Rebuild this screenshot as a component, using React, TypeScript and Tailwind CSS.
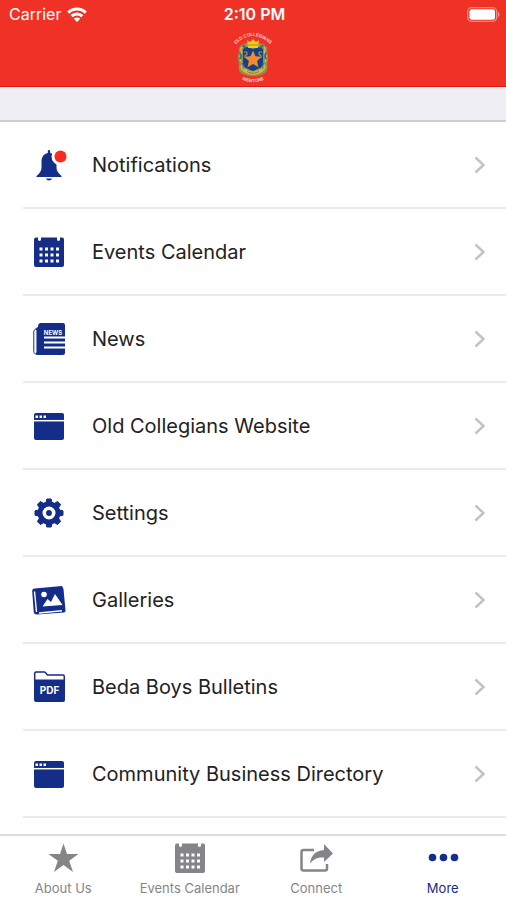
import React, { useState } from 'react';

type IconProps = { className?: string };

interface MenuItem {
    id: string;
    label: string;
    icon: React.FC<IconProps>;
};

const WifiIcon: React.FC<IconProps> = ({ className }) => (
    <svg viewBox="0 0 20 15" className={className} fill="none" stroke="currentColor" strokeWidth="3" aria-hidden="true">
        <path d="M1.2 5.6C6.2.7 13.8.7 18.8 5.6" />
        <path d="M4.6 9.2c3.1-3 7.7-3 10.8 0" />
        <path d="M10 15l-3.2-3.3c1.8-1.6 4.6-1.6 6.4 0z" fill="currentColor" stroke="none" />
    </svg>
);

const BatteryIcon: React.FC<IconProps> = ({ className }) => (
    <svg viewBox="0 0 33 15" className={className} aria-hidden="true">
        <rect x="0.7" y="0.7" width="29" height="13.6" rx="4" fill="none" stroke="#fff" strokeOpacity="0.45" strokeWidth="1.3" />
        <rect x="2.5" y="2.3" width="25.5" height="10.4" rx="2.5" fill="#fff" />
        <path d="M31 5c2 .8 2 4.2 0 5z" fill="#fff" fillOpacity="0.5" />
    </svg>
);

const Crest: React.FC<IconProps> = ({ className }) => (
    <svg viewBox="0 0 40 52" className={className} role="img" aria-label="Old Collegians">
        <defs>
            <path id="crest-top" d="M2 13Q20-5 38 13" />
            <path id="crest-bottom" d="M5 45.500Q20 55 35 45.500" />
        </defs>
        <g fill="#ffdcd8" fontSize="4.500" fontWeight="600" textAnchor="middle" fontFamily="Inter, sans-serif">
            <text><textPath href="#crest-top" startOffset="50%">OLD COLLEGIANS</textPath></text>
            <text><textPath href="#crest-bottom" startOffset="50%">MENTONE</textPath></text>
        </g>
        {/* mantling */}
        <path d="M13 11C8 12 5 15 6 20c-2 4-1 9 0 12-1 4 0 9 4 10 5 3 15 3 20 0 4-1 5-6 4-10 1-3 2-8 0-12 1-5-2-8-7-9z" fill="#8f8f58" />
        <path d="M9 15c-3 3 1 4-1 7s-1 5 0 8M31 15c3 3-1 4 1 7s1 5 0 8M9 33c-2 3 1 7 5 6M31 33c2 3-1 7-5 6" fill="none" stroke="#d8b545" strokeWidth="1.500" />
        <path d="M6.500 21c2 1 2 4 0 6M33.500 21c-2 1-2 4 0 6M10 13l3 4M30 13l-3 4M10 31c0 3 2 4 4 5M30 31c0 3-2 4-4 5" fill="none" stroke="#2c6b80" strokeWidth="1.500" />
        {/* shield */}
        <path d="M10 17l4-2 6 2 6-2 4 2v13c0 5-5 7-10 9-5-2-10-4-10-9z" fill="#12408a" />
        <path d="M11 20h3v3h-2v3M29 20h-3v3h2v3" fill="none" stroke="#c9a63f" strokeWidth="0.900" />
        <path d="M20 18.500l2.500 5.700 6.300.6-4.700 4.200 1.400 6.200-5.500-3.300-5.500 3.300 1.400-6.200-4.700-4.200 6.300-.6z" fill="#f58a2c" />
        <path d="M14 8l3 2 3-3 3 3 3-2-1 8H15z" fill="#f2cb20" />
        <path d="M15 13h10" stroke="#b98a1c" strokeWidth="1" />
        <path d="M11 36q9 7 18 0v4q-9 6-18 0z" fill="#d9b63c" />
        <path d="M14 39.500q6 3.500 12 0" fill="none" stroke="#8a7a3a" strokeWidth="1" />
    </svg>
);

const BellIcon: React.FC<IconProps> = ({ className }) => (
    <svg viewBox="0 0 32 32" className={className} aria-hidden="true">
        <path d="M16 1c.7 0 1.200.6 1.200 1.400v1.500c4.500 1 6.300 4.500 6.300 9v5.500c0 3 1.500 5.500 5 8.600v1H3.500v-1c3.500-3 5-5.600 5-8.600v-5.500c0-4.500 1.800-8 6.300-9V2.400c0-.8.5-1.400 1.200-1.400z" fill="currentColor" />
        <path d="M13 29.500h6c-.4 1.300-1.500 2-3 2s-2.600-.7-3-2z" fill="currentColor" />
        <circle cx="27.500" cy="7.500" r="9" fill="#fff" />
        <circle cx="27.500" cy="7.500" r="6" fill="#fb2a20" />
    </svg>
);

const CalendarIcon: React.FC<IconProps> = ({ className }) => (
    <svg viewBox="0 0 32 32" className={className} aria-hidden="true">
        <path d="M3 1.500h2v2.300c0 1.500 3 1.500 3 0V1.500h16v2.300c0 1.500 3 1.500 3 0V1.500h2a2 2 0 0 1 2 2v25.500a2 2 0 0 1-2 2H3a2 2 0 0 1-2-2V3.500a2 2 0 0 1 2-2z" fill="currentColor" />
        {[12, 18, 24].map((y) =>
            [7, 12.5, 18, 23.5].map((x) => (
                <rect key={`${x}-${y}`} x={x - 0.5} y={y - 0.5} width="3" height="3" fill="#fff" />
            ))
        )}
    </svg>
);

const NewsIcon: React.FC<IconProps> = ({ className }) => (
    <svg viewBox="0 0 32 32" className={className} aria-hidden="true">
        <path d="M5 5H3.500L.8 8v20.500c0 1.500 1 2.500 2.500 2.500H7" fill="none" stroke="currentColor" strokeWidth="1" />
        <path d="M8 0h22a2 2 0 0 1 2 2v28a2 2 0 0 1-2 2H4.500c-1 0-1.500-.5-1.500-1.500V6l2-2c0-3 1-4 3-4z" fill="currentColor" />
        <path d="M2.700 7v22.500" stroke="#fff" strokeWidth="1.500" />
        <text x="20" y="11.500" fill="#fff" fontSize="6" fontWeight="700" textAnchor="middle" fontFamily="Inter, sans-serif">NEWS</text>
        <path d="M11 14.500h21M11 19.500h21M11 24.500h21" stroke="#fff" strokeWidth="1.800" />
    </svg>
);

const BrowserIcon: React.FC<IconProps> = ({ className }) => (
    <svg viewBox="0 0 32 32" className={className} aria-hidden="true">
        <rect x="1" y="3" width="30" height="27" rx="2" fill="currentColor" />
        <path d="M1 10.700h30" stroke="#fff" strokeWidth="1.500" />
        <path d="M2.500 5.500H5v2.500H2.500zM6.500 5.500H9v2.500H6.500zM10.500 5.500H13v2.500h-2.500z" fill="#fff" />
    </svg>
);

const GearIcon: React.FC<IconProps> = ({ className }) => (
    <svg viewBox="0 0 32 32" className={className} aria-hidden="true">
        <circle cx="16" cy="16" r="11.500" fill="currentColor" />
        {[0, 45, 90, 135, 180, 225, 270, 315].map((angle) => (
            <path key={angle} d="M13 6l.8-4h4.400l.8 4z" fill="currentColor" stroke="currentColor" strokeLinejoin="round" transform={`rotate(${angle} 16 16)`} />
        ))}
        <circle cx="16" cy="16" r="4.700" fill="none" stroke="#fff" strokeWidth="3.600" />
    </svg>
);

const GalleryIcon: React.FC<IconProps> = ({ className }) => (
    <svg viewBox="0 0 34 30" className={className} aria-hidden="true">
        <path d="M2.500 3.500L30 1 31.500 4l2 21.500c0 1.200-.5 1.800-1.500 2L5 29.500c-2 0-3-.8-3.300-2.500L.2 6C.2 4.500 1 3.600 2.500 3.500z" fill="currentColor" />
        <path d="M2.500 6.500l2 20.500M7 28l23-2.300" fill="none" stroke="#fff" strokeWidth="1.400" />
        <circle cx="12" cy="9.500" r="2.800" fill="#fff" />
        <path d="M10.500 21.500l5-7.500 3.500 3 4-8 7.500 11z" fill="#fff" />
    </svg>
);

const PdfIcon: React.FC<IconProps> = ({ className }) => (
    <svg viewBox="0 0 32 32" className={className} aria-hidden="true">
        <path d="M1.700 10V2.500c0-1 .5-1.500 1.500-1.500h8.300c1.500 0 2 3 3.500 3h14.800c1 0 1.500.5 1.500 1.500V10" fill="none" stroke="currentColor" strokeWidth="1.500" />
        <path d="M1 8.500h31V29a2 2 0 0 1-2 2H3a2 2 0 0 1-2-2z" fill="currentColor" />
        <text x="16.500" y="23" fill="#fff" fontSize="10" fontWeight="700" textAnchor="middle" fontFamily="Inter, sans-serif">PDF</text>
    </svg>
);

const StarIcon: React.FC<IconProps> = ({ className }) => (
    <svg viewBox="0 0 32 32" className={className} aria-hidden="true">
        <path d="M16.500 1.500L20 12h11.500l-9.300 6.700 3.800 11.300-9.500-7-9.500 7 3.800-11.300L1.500 12H13z" fill="currentColor" />
    </svg>
);

const ShareIcon: React.FC<IconProps> = ({ className }) => (
    <svg viewBox="0 0 32 32" className={className} aria-hidden="true">
        <path d="M14 8H3.500a2 2 0 0 0-2 2v16.500a2 2 0 0 0 2 2h21.500a2 2 0 0 0 2-2V22" fill="none" stroke="currentColor" strokeWidth="2.500" />
        <path d="M24 2l9 9.500-9 8.500v-4.500c-6-.3-10 1-14 6 1-8.500 6-13 14-13.500z" fill="currentColor" />
    </svg>
);

const DotsIcon: React.FC<IconProps> = ({ className }) => (
    <svg viewBox="0 0 32 32" className={className} aria-hidden="true">
        <circle cx="5.500" cy="15.500" r="3.800" fill="currentColor" />
        <circle cx="16.500" cy="15.500" r="3.800" fill="currentColor" />
        <circle cx="27.500" cy="15.500" r="3.800" fill="currentColor" />
    </svg>
);

const ChevronIcon: React.FC<IconProps> = ({ className }) => (
    <svg viewBox="0 0 12 18" className={className} fill="none" stroke="currentColor" strokeWidth="2.400" aria-hidden="true">
        <path d="M1.500 1.500L9.500 9l-8 7.500" />
    </svg>
);

const menuItems: MenuItem[] = [
    { id: 'notifications', label: 'Notifications', icon: BellIcon },
    { id: 'events', label: 'Events Calendar', icon: CalendarIcon },
    { id: 'news', label: 'News', icon: NewsIcon },
    { id: 'website', label: 'Old Collegians Website', icon: BrowserIcon },
    { id: 'settings', label: 'Settings', icon: GearIcon },
    { id: 'galleries', label: 'Galleries', icon: GalleryIcon },
    { id: 'bulletins', label: 'Beda Boys Bulletins', icon: PdfIcon },
    { id: 'directory', label: 'Community Business Directory', icon: BrowserIcon },
];

const tabs: MenuItem[] = [
    { id: 'about', label: 'About Us', icon: StarIcon },
    { id: 'events', label: 'Events Calendar', icon: CalendarIcon },
    { id: 'connect', label: 'Connect', icon: ShareIcon },
    { id: 'more', label: 'More', icon: DotsIcon },
];

const MenuRow: React.FC<{ item: MenuItem }> = ({ item }) => {
    const Icon = item.icon;

    return (
        <li className="ml-[23px] border-b-2 border-[#ebebeb]">
            <a href={`#${item.id}`} className="flex h-[85px] items-center pr-5 pl-[9px]">
                <Icon className="h-8 w-[34px] shrink-0 overflow-visible text-[#142d88]" />
                <span className="ml-[26px] flex-1 text-xl text-[#222222]">{item.label}</span>
                <ChevronIcon className="h-[18px] w-3 text-[#c2c2c4]" />
            </a>
        </li>
    );
};

export default function App() {
    const [activeTab, setActiveTab] = useState<string>('more');

    return (
        <div className="flex h-screen flex-col bg-white font-['Inter',sans-serif]">
            <header className="shrink-0 border-b border-[#dc1810] bg-[#f03226] text-white">
                <div className="grid h-7 grid-cols-3 items-center pr-1.5 pl-[9px]">
                    <div className="flex items-center gap-1.5">
                        <span className="text-base">Carrier</span>
                        <WifiIcon className="h-[15px] w-5" />
                    </div>
                    <span className="text-center text-base font-semibold">2:10 PM</span>
                    <BatteryIcon className="h-[15px] w-[33px] justify-self-end" />
                </div>
                <div className="flex h-[58px] justify-center pt-1">
                    <Crest className="h-[52px] w-10" />
                </div>
            </header>

            <main className="min-h-0 flex-1 overflow-hidden">
                <div className="h-[35px] border-b-2 border-[#cfcfd2] bg-[#efeef4]" />
                <ul>
                    {menuItems.map((item) => (
                        <MenuRow key={item.id} item={item} />
                    ))}
                </ul>
            </main>

            <nav className="grid shrink-0 grid-cols-4 border-t-2 border-[#dcdcdc] bg-white">
                {tabs.map((tab) => {
                    const Icon = tab.icon;
                    return (
                        <button
                            key={tab.id}
                            onClick={() => setActiveTab(tab.id)}
                            className={`flex h-16 flex-col items-center pt-1.5 text-[13px] leading-5 ${activeTab === tab.id ? 'text-[#142d88]' : 'text-[#858589]'}`}
                        >
                            <Icon className="mb-1 h-8 w-8 overflow-visible" />
                            {tab.label}
                        </button>
                    );
                })}
            </nav>
        </div>
    );
}
